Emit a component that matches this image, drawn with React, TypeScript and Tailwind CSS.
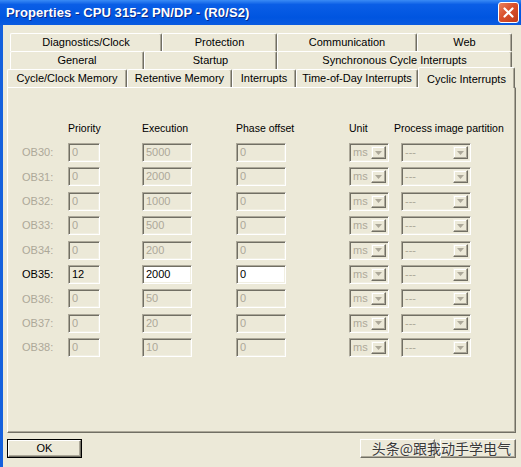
import React from "react";

const rows = [
  { ob: "OB30", pri: "0", exe: "5000", ph: "0", active: false },
  { ob: "OB31", pri: "0", exe: "2000", ph: "0", active: false },
  { ob: "OB32", pri: "0", exe: "1000", ph: "0", active: false },
  { ob: "OB33", pri: "0", exe: "500", ph: "0", active: false },
  { ob: "OB34", pri: "0", exe: "200", ph: "0", active: false },
  { ob: "OB35", pri: "12", exe: "2000", ph: "0", active: true },
  { ob: "OB36", pri: "0", exe: "50", ph: "0", active: false },
  { ob: "OB37", pri: "0", exe: "20", ph: "0", active: false },
  { ob: "OB38", pri: "0", exe: "10", ph: "0", active: false },
];

const tabRow1 = [
  { label: "Diagnostics/Clock", w: "w-[152px]" },
  { label: "Protection", w: "w-[115px]" },
  { label: "Communication", w: "w-[140px]" },
  { label: "Web", w: "w-[95px]" },
];
const tabRow2 = [
  { label: "General", w: "w-[134px]" },
  { label: "Startup", w: "w-[133px]" },
  { label: "Synchronous Cycle Interrupts", w: "w-[235px]" },
];
const tabRow3 = [
  { label: "Cycle/Clock Memory", w: "w-[120px]" },
  { label: "Retentive Memory", w: "w-[105px]" },
  { label: "Interrupts", w: "w-[64px]" },
  { label: "Time-of-Day Interrupts", w: "w-[122px]" },
];

function Tab({ label, w }: { label: string; w: string }) {
  return (
    <div
      className={`${w} h-full flex items-center justify-center rounded-t-[2px] border-t border-l border-white border-r border-r-[#716F64] shadow-[inset_-1px_0_0_#ACA899] text-[11px] text-black whitespace-nowrap`}
    >
      {label}
    </div>
  );
}

function Field({
  value,
  width,
  enabled,
  white,
}: {
  value: string;
  width: string;
  enabled?: boolean;
  white?: boolean;
}) {
  return (
    <div
      className={`${width} h-[19px] flex items-center pl-[3px] border border-t-[#ACA899] border-l-[#ACA899] border-b-white border-r-white shadow-[inset_1px_1px_0_#716F64,inset_-1px_-1px_0_#F1EFE2] text-[11px] leading-none ${
        white ? "bg-white" : "bg-[#ECE9D8]"
      } ${enabled ? "text-black" : "text-[#ACA899]"}`}
    >
      {value}
    </div>
  );
}

function Combo({ value, width }: { value: string; width: string }) {
  return (
    <div
      className={`${width} h-[19px] flex items-stretch p-[2px] border border-t-[#ACA899] border-l-[#ACA899] border-b-white border-r-white shadow-[inset_1px_1px_0_#716F64,inset_-1px_-1px_0_#F1EFE2]`}
    >
      <div className="flex-1 flex items-center pl-[1px] text-[11px] leading-none text-[#ACA899]">
        {value}
      </div>
      <div className="w-[15px] flex items-center justify-center border border-t-[#F1EFE2] border-l-[#F1EFE2] border-b-[#716F64] border-r-[#716F64] shadow-[inset_-1px_-1px_0_#ACA899,inset_1px_1px_0_#fff]">
        <svg width="7" height="4" viewBox="0 0 7 4">
          <path d="M0 0h7L3.5 4z" fill="#ACA899" />
        </svg>
      </div>
    </div>
  );
}

function Button({ children, isDefault, width }: { children?: React.ReactNode; isDefault?: boolean; width: string }) {
  return (
    <div
      className={`${width} h-[19px] flex items-center justify-center text-[11px] text-black ${
        isDefault ? "border border-black" : ""
      }`}
    >
      <div className="w-full h-full flex items-center justify-center border border-t-white border-l-white border-b-[#716F64] border-r-[#716F64] shadow-[inset_-1px_-1px_0_#ACA899]">
        {children}
      </div>
    </div>
  );
}

export default function App() {
  return (
    <div className="w-[521px] h-[467px] overflow-hidden bg-[#ECE9D8] flex flex-col font-['Liberation_Sans',Arial,sans-serif]">
      {/* title bar */}
      <div className="h-[25px] shrink-0 flex items-center justify-between pl-[6px] pr-[2px] bg-[linear-gradient(to_bottom,#3A8BF5_0%,#0A5EE6_18%,#0055E0_70%,#0A5BE0_100%)]">
        <span className="text-[13px] font-bold text-white tracking-[0.1px] [text-shadow:1px_1px_0_#0A2A8A]">
          Properties - CPU 315-2 PN/DP - (R0/S2)
        </span>
        <div className="w-[21px] h-[21px] rounded-[3px] border border-white bg-[linear-gradient(135deg,#E9835F_0%,#D9502C_45%,#C03A18_100%)] flex items-center justify-center">
          <svg width="11" height="11" viewBox="0 0 11 11">
            <path d="M1.5 1.5l8 8M9.5 1.5l-8 8" stroke="#fff" strokeWidth="2.2" strokeLinecap="round" />
          </svg>
        </div>
      </div>

      {/* body */}
      <div className="flex-1 flex flex-col border-l-[3px] border-l-[#1460DD] pl-[4px] pr-[5px] pt-[8px]">
        {/* tabs */}
        <div className="flex flex-col">
          <div className="h-[18px] flex ml-[3px]">
            {tabRow1.map((t) => (
              <Tab key={t.label} {...t} />
            ))}
          </div>
          <div className="h-[18px] flex ml-[3px]">
            {tabRow2.map((t) => (
              <Tab key={t.label} {...t} />
            ))}
          </div>
          <div className="h-[18px] flex">
            {tabRow3.map((t) => (
              <Tab key={t.label} {...t} />
            ))}
            <div className="relative z-10 self-end -mb-px w-[97px] h-[21px] flex items-start justify-center pt-[3px] rounded-t-[2px] bg-[#ECE9D8] border-t border-l border-white border-r border-r-[#716F64] shadow-[inset_-1px_0_0_#ACA899] text-[11px] text-black whitespace-nowrap">
              Cyclic Interrupts
            </div>
          </div>
        </div>

        {/* panel */}
        <div className="h-[346px] border border-t-white border-l-white border-b-[#716F64] border-r-[#716F64] shadow-[inset_-1px_-1px_0_#ACA899] pl-[14px] pt-[34px]">
          <div className="grid grid-cols-[46px_74px_94px_113px_52px_70px] text-[10.5px] leading-[13px] text-black">
            <div />
            <div>Priority</div>
            <div>Execution</div>
            <div className="whitespace-nowrap">Phase offset</div>
            <div>Unit</div>
            <div className="-ml-[7px] whitespace-nowrap">Process image partition</div>
          </div>
          <div className="mt-[8px] grid grid-cols-[46px_74px_94px_113px_52px_70px] gap-y-[5.4px] items-center">
            {rows.map((r) => (
              <React.Fragment key={r.ob}>
                <div className={`text-[11px] ${r.active ? "text-black" : "text-[#ACA899]"}`}>{r.ob}:</div>
                <Field value={r.pri} width="w-[32px]" enabled={r.active} />
                <Field value={r.exe} width="w-[50px]" enabled={r.active} white={r.active} />
                <Field value={r.ph} width="w-[50px]" enabled={r.active} white={r.active} />
                <Combo value="ms" width="w-[40px]" />
                <Combo value="---" width="w-[70px]" />
              </React.Fragment>
            ))}
          </div>
        </div>

        {/* footer */}
        <div className="relative mt-[6px] flex items-start">
          <Button isDefault width="w-[75px]">
            OK
          </Button>
          <div className="ml-auto flex gap-[5px]">
            <Button width="w-[75px]" />
            <Button width="w-[76px]" />
          </div>
          <span className="absolute right-[5px] top-[-1px] text-[14px] leading-[20px] text-[#3a3a3a] [text-shadow:0_0_2px_#fff] font-['Noto_Sans_CJK_SC',sans-serif]">
            头条@跟我动手学电气
          </span>
        </div>
      </div>
    </div>
  );
}
